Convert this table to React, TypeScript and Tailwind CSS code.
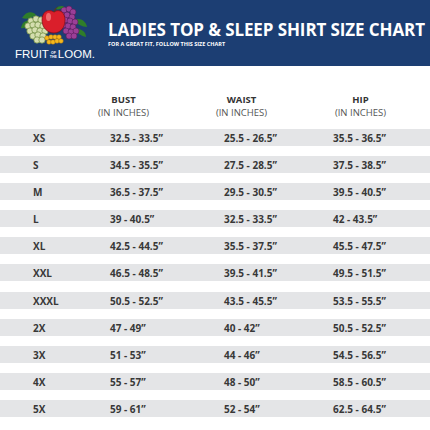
import React from "react";

const rows = [
    ["XS", "32.5 - 33.5\u201D", "25.5 - 26.5\u201D", "35.5 - 36.5\u201D"],
    ["S", "34.5 - 35.5\u201D", "27.5 - 28.5\u201D", "37.5 - 38.5\u201D"],
    ["M", "36.5 - 37.5\u201D", "29.5 - 30.5\u201D", "39.5 - 40.5\u201D"],
    ["L", "39 - 40.5\u201D", "32.5 - 33.5\u201D", "42 - 43.5\u201D"],
    ["XL", "42.5 - 44.5\u201D", "35.5 - 37.5\u201D", "45.5 - 47.5\u201D"],
    ["XXL", "46.5 - 48.5\u201D", "39.5 - 41.5\u201D", "49.5 - 51.5\u201D"],
    ["XXXL", "50.5 - 52.5\u201D", "43.5 - 45.5\u201D", "53.5 - 55.5\u201D"],
    ["2X", "47 - 49\u201D", "40 - 42\u201D", "50.5 - 52.5\u201D"],
    ["3X", "51 - 53\u201D", "44 - 46\u201D", "54.5 - 56.5\u201D"],
    ["4X", "55 - 57\u201D", "48 - 50\u201D", "58.5 - 60.5\u201D"],
    ["5X", "59 - 61\u201D", "52 - 54\u201D", "62.5 - 64.5\u201D"],
];

const greenGrapes = [
    [31, 21], [36, 19], [41, 20], [28, 26], [33, 25], [38, 25], [43, 26],
    [30, 31], [35, 30], [40, 31], [45, 31], [33, 36], [38, 35], [43, 36], [37, 40], [42, 40],
];

const purpleGrapes = [
    [64, 10], [69, 9], [73, 12], [62, 15], [67, 15], [72, 17], [65, 20], [70, 21], [75, 22],
    [63, 25], [68, 26], [73, 27], [66, 31], [71, 32], [76, 31], [69, 36], [74, 36],
];

const currants = [[47, 38], [51, 37], [55, 37], [59, 37], [49, 42], [53, 42], [57, 41], [61, 41]];

// fruit cluster drawn in page coordinates (viewBox matches its place in the header)
const FruitLogo = () => (
    <svg width="72" height="42" viewBox="18 5 72 42" className="block">
        <path d="M22 18 C26 11 33 11 36 15 C31 18 27 20 22 18 Z" fill="#2f7d2a" />
        <path d="M21 28 C22 21 28 19 31 22 C28 26 25 29 21 28 Z" fill="#2f7d2a" />
        <path d="M74 20 C80 17 86 21 87 27 C82 27 77 24 74 20 Z" fill="#2f7d2a" />
        <path d="M75 29 C81 28 86 32 86 37 C81 36 77 33 75 29 Z" fill="#2f7d2a" />
        {greenGrapes.map(([cx, cy], i) => (
            <circle key={i} cx={cx} cy={cy} r="3.2" fill="#d5deaf" stroke="#6b8a3a" strokeWidth="0.7" />
        ))}
        {purpleGrapes.map(([cx, cy], i) => (
            <circle key={i} cx={cx} cy={cy} r="3" fill="#9b3f97" stroke="#5a1d5b" strokeWidth="0.6" />
        ))}
        <path d="M54 12 C47 8 42 13 42 20 C42 28 48 33 54 33 C60 33 65 28 65 20 C65 13 60 8 54 12 Z" fill="#da1f2b" stroke="#7e0d15" strokeWidth="0.7" />
        <ellipse cx="48.5" cy="17" rx="2.5" ry="4" fill="#f47f80" opacity="0.8" />
        <path d="M54 12 C55 9 56 8 58 7" stroke="#5a3a1a" strokeWidth="1.1" fill="none" />
        <path d="M56 9 C59 5 63 6 64 7 C61 9 58 10 56 9 Z" fill="#2f7d2a" />
        {currants.map(([cx, cy], i) => (
            <circle key={i} cx={cx} cy={cy} r="2.3" fill="#f5b81d" stroke="#ad720a" strokeWidth="0.5" />
        ))}
    </svg>
);

const App = () => {
    return (
        <main className="w-[430px] h-[430px] bg-white overflow-hidden" style={{ fontFamily: '"Open Sans", sans-serif' }}>
            <header className="h-[66px] bg-[#1c3e73] flex">
                <div className="w-[108px] flex flex-col pt-[5px] pl-[18px]">
                    <FruitLogo />
                    <div className="flex items-center text-white leading-none mt-[2px] -ml-[3px]" style={{ fontFamily: '"Liberation Sans", sans-serif' }}>
                        <span className="text-[11.5px] font-light">FRUIT</span>
                        <span className="flex flex-col text-[3.5px] font-bold leading-[4px] mx-[1px] items-center">
                            <span>OF</span>
                            <span>THE</span>
                        </span>
                        <span className="text-[11.5px] font-light">LOOM.</span>
                    </div>
                </div>
                <div className="pt-[20px] text-white">
                    <h1 className="text-[17px] font-bold leading-[20px] tracking-[-0.1px] whitespace-nowrap">LADIES TOP &amp; SLEEP SHIRT SIZE CHART</h1>
                    <p className="text-[5.5px] font-bold leading-[7px] mt-[1px] whitespace-nowrap">FOR A GREAT FIT, FOLLOW THIS SIZE CHART</p>
                </div>
            </header>

            <section className="pt-[27px] flex text-[9.5px] text-center">
                <div className="ml-[84px] w-[79px]">
                    <p className="font-bold text-[#333] leading-[13px]">BUST</p>
                    <p className="text-[#555] leading-[13px]">(IN INCHES)</p>
                </div>
                <div className="ml-[39px] w-[79px]">
                    <p className="font-bold text-[#333] leading-[13px]">WAIST</p>
                    <p className="text-[#555] leading-[13px]">(IN INCHES)</p>
                </div>
                <div className="ml-[40px] w-[79px]">
                    <p className="font-bold text-[#333] leading-[13px]">HIP</p>
                    <p className="text-[#555] leading-[13px]">(IN INCHES)</p>
                </div>
            </section>

            <section className="mt-[10px] flex flex-col gap-[10.1px]">
                {rows.map((r) => (
                    <div key={r[0]} className="h-[17px] bg-[#e4e5e7] flex pl-[33px] pt-[3px] text-[10px] leading-[12px] font-bold text-[#383838]">
                        <span className="w-[77px]">{r[0]}</span>
                        <span className="w-[114px]">{r[1]}</span>
                        <span className="w-[109px]">{r[2]}</span>
                        <span>{r[3]}</span>
                    </div>
                ))}
            </section>
        </main>
    );
};

export default App;
